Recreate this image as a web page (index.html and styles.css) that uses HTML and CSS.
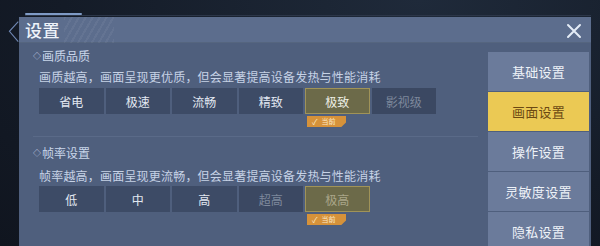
FILE: index.html
```html
<!DOCTYPE html>
<html lang="zh">
<head>
<meta charset="utf-8">
<link rel="stylesheet" href="styles.css">
</head>
<body>
<div class="screen">
  <div class="topline"><span class="topline-lit"></span></div>
  <div class="row">
    <svg class="chevron" width="19" height="30" viewBox="0 0 19 30">
      <path d="M18 1 L6 14 L18 28" fill="none" stroke="#6f87b3" stroke-width="1.5"/>
    </svg>
    <div class="panel">
      <div class="titlebar">
        <span class="title">设置</span>
        <span class="stripes"></span>
        <svg class="close" width="16" height="16" viewBox="0 0 16 16">
          <path d="M2 2 L14 14 M14 2 L2 14" stroke="#e4ecf6" stroke-width="2" stroke-linecap="round"/>
        </svg>
      </div>
      <div class="main">
        <div class="content">
          <div class="section">
            <div class="sec-title"><span class="dia">◇</span>画质品质</div>
            <div class="desc">画质越高，画面呈现更优质，但会显著提高设备发热与性能消耗</div>
            <div class="opts">
              <div class="opt">省电</div>
              <div class="opt">极速</div>
              <div class="opt">流畅</div>
              <div class="opt">精致</div>
              <div class="opt sel">极致<span class="badge"><span class="chk">✓</span>当前</span></div>
              <div class="opt dis">影视级</div>
            </div>
          </div>
          <div class="sep"></div>
          <div class="section second">
            <div class="sec-title"><span class="dia">◇</span>帧率设置</div>
            <div class="desc">帧率越高，画面呈现更流畅，但会显著提高设备发热与性能消耗</div>
            <div class="opts">
              <div class="opt">低</div>
              <div class="opt">中</div>
              <div class="opt">高</div>
              <div class="opt dis">超高</div>
              <div class="opt sel dim">极高<span class="badge"><span class="chk">✓</span>当前</span></div>
            </div>
          </div>
        </div>
        <div class="nav">
          <div class="nav-item">基础设置</div>
          <div class="nav-item active">画面设置</div>
          <div class="nav-item">操作设置</div>
          <div class="nav-item">灵敏度设置</div>
          <div class="nav-item">隐私设置</div>
        </div>
      </div>
    </div>
  </div>
</div>
</body>
</html>
```

FILE: styles.css
```css
* { box-sizing: border-box; }
html, body {
  margin: 0;
  padding: 0;
}
body {
  width: 600px;
  height: 246px;
  overflow: hidden;
  background: radial-gradient(ellipse at 70% 0%, #1f2a3a 0%, #141b27 60%, #10151f 100%);
  font-family: "Noto Sans CJK SC", "Noto Sans", sans-serif;
}
.screen {
  width: 600px;
  height: 246px;
  padding-top: 13px;
  overflow: hidden;
}
.topline {
  margin-left: 25px;
  width: 566px;
  height: 3px;
  display: flex;
  align-items: flex-start;
  border-bottom: 1px solid #2c3648;
}
.topline-lit {
  width: 57px;
  height: 2px;
  background: #7f9bc6;
  border-radius: 1px;
}
.row {
  display: flex;
  margin-top: 1px;
  padding-left: 5px;
}
.chevron {
  flex: none;
  margin-top: 0;
  width: 14px;
}
.panel {
  width: 572px;
  height: 229px;
  background: #4f5f7d;
  overflow: hidden;
}
.titlebar {
  height: 26px;
  background: #5c6d8d;
  display: flex;
  align-items: center;
  padding-left: 6px;
  padding-right: 9px;
  border-bottom: 1px solid #55657f;
}
.title {
  color: #eef3fa;
  font-size: 17px;
  font-weight: 500;
  letter-spacing: 0.5px;
}
.stripes {
  width: 50px;
  height: 26px;
  margin-left: 4px;
  background: repeating-linear-gradient(120deg, rgba(255,255,255,0.05) 0 2px, transparent 2px 6px);
}
.close {
  margin-left: auto;
  margin-top: 2px;
}
.main {
  display: flex;
  justify-content: space-between;
  height: 203px;
}
.content {
  width: 460px;
  padding-left: 14px;
}
.section {
  padding-top: 5px;
}
.second {
  padding-top: 8px;
}
.sec-title {
  color: #c9d6ea;
  font-size: 12px;
  line-height: 16px;
  display: flex;
  align-items: center;
}
.dia {
  font-size: 8px;
  margin-right: 1px;
  color: #c9d6ea;
}
.desc {
  color: #c6d2e6;
  font-size: 12px;
  line-height: 16px;
  margin-top: 5px;
  padding-left: 6px;
  letter-spacing: 0.2px;
}
.second .desc {
  margin-top: 7px;
}
.opts {
  display: flex;
  gap: 2px;
  margin-top: 3px;
  margin-left: 6px;
}
.second .opts {
  margin-top: 2px;
}
.opt {
  position: relative;
  width: 64.5px;
  height: 26px;
  background: #3d4b66;
  color: #e2e8f2;
  font-size: 12px;
  display: flex;
  align-items: center;
  justify-content: center;
}
.opt.dis {
  color: #7e889c;
  background: #3b4862;
}
.opt.sel {
  background: #6c6a49;
  border: 1px solid #a09358;
  color: #eef0e6;
}
.opt.sel.dim {
  color: #aaa689;
}
.badge {
  position: absolute;
  left: 1px;
  top: 27px;
  width: 39px;
  height: 11px;
  background: #d6923a;
  color: #fbe9c8;
  font-size: 7px;
  line-height: 11px;
  display: flex;
  align-items: center;
  padding-left: 5px;
  gap: 4px;
  clip-path: polygon(0 0, 100% 0, 100% 60%, 88% 100%, 0 100%);
}
.chk {
  font-size: 8px;
}
.sep {
  margin-top: 22px;
  width: 445px;
  height: 1px;
  background: #5a6a88;
}
.nav {
  width: 101px;
  margin-top: 9px;
  margin-right: 2px;
  display: flex;
  flex-direction: column;
  gap: 1px;
}
.nav-item {
  height: 39px;
  flex: none;
  background: #6b7b9b;
  color: #eef2f8;
  font-size: 13px;
  display: flex;
  align-items: center;
  justify-content: center;
  letter-spacing: 0.3px;
}
.nav-item.active {
  background: #ebc954;
  color: #6b4913;
}
```
